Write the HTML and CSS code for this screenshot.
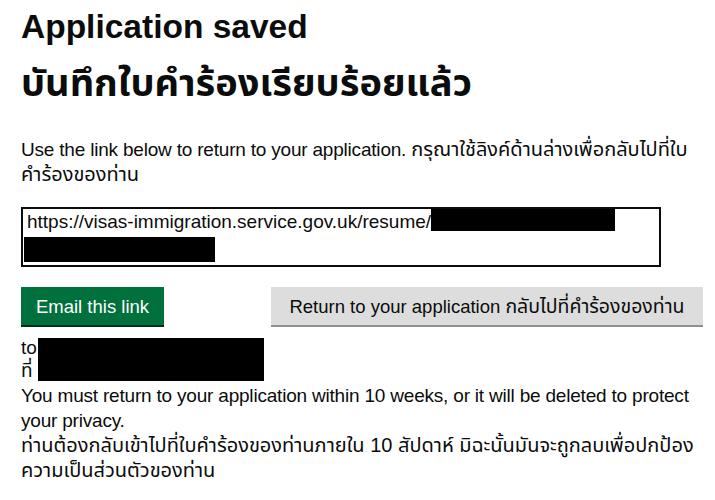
FILE: index.html
```html
<!DOCTYPE html>
<html lang="en">
<head>
<meta charset="utf-8">
<title>Application saved</title>
<link rel="stylesheet" href="styles.css">
</head>
<body>
<main class="page">
  <h1 class="title">
    <span class="title-line">Application saved</span>
    <span class="title-line title-thai">บันทึกใบคำร้องเรียบร้อยแล้ว</span>
  </h1>
  <p class="body-text intro">Use the link below to return to your application. <span class="th">กรุณาใช้ลิงค์ด้านล่างเพื่อกลับไปที่ใบคำร้องของท่าน</span></p>
  <div class="link-box">
    <span class="link-text">https://visas-immigration.service.gov.uk/resume/</span><span class="redact redact-a"></span><br>
    <span class="redact redact-b"></span>
  </div>
  <div class="actions">
    <button class="btn btn-green" type="button">Email this link</button>
    <button class="btn btn-grey" type="button">Return to your application <span class="th">กลับไปที่คำร้องของท่าน</span></button>
  </div>
  <div class="sent">
    <div class="sent-lines">
      <span>to</span>
      <span class="th">ที่</span>
    </div>
    <span class="redact redact-c"></span>
  </div>
  <p class="body-text warning">You must return to your application within 10 weeks, or it will be deleted to protect your privacy.<br><span class="th">ท่านต้องกลับเข้าไปที่ใบคำร้องของท่านภายใน 10 สัปดาห์ มิฉะนั้นมันจะถูกลบเพื่อปกป้องความเป็นส่วนตัวของท่าน</span></p>
</main>
</body>
</html>
```

FILE: styles.css
```css
html, body {
  margin: 0;
  padding: 0;
  background: #ffffff;
}
body {
  font-family: "Liberation Sans", "Noto Sans Thai", "Noto Sans", "DejaVu Sans", sans-serif;
  color: #0b0c0c;
}
.page {
  padding: 9px 0 0 21px;
}
.title {
  margin: 0;
  font-size: 33.5px;
  font-weight: 700;
  line-height: 36px;
  display: flex;
  flex-direction: column;
  gap: 18px;
}
.title-thai {
  font-size: 38px;
  line-height: 40px;
}
.th {
  font-size: 20px;
  line-height: 24px;
  letter-spacing: 0;
}
.body-text {
  margin: 0;
  font-size: 19px;
  line-height: 25px;
  letter-spacing: -0.2px;
  width: 694px;
}
.intro {
  margin-top: 34px;
}
.link-box {
  margin-top: 20px;
  width: 630px;
  height: 56px;
  border: 2px solid #0b0c0c;
  padding: 0 2px 0 4px;
  font-size: 19px;
  line-height: 26px;
}
.redact {
  display: inline-block;
  background: #000;
  vertical-align: top;
}
.redact-a {
  width: 184px;
  height: 22px;
}
.redact-b {
  width: 191px;
  height: 25px;
  margin-left: -3px;
  margin-top: 2px;
}
.actions {
  margin-top: 20px;
  display: flex;
  gap: 107px;
}
.btn {
  font-family: inherit;
  font-size: 18.5px;
  line-height: 20px;
  border: 0;
  padding: 9px 10px 8px;
  height: 38px;
  white-space: nowrap;
}
.btn .th {
  font-size: 19.5px;
  line-height: 20px;
}
.btn-green {
  background: #00703c;
  color: #ffffff;
  box-shadow: 0 2px 0 #002d18;
  width: 143px;
}
.btn-grey {
  background: #dddddd;
  color: #0b0c0c;
  box-shadow: 0 2px 0 #929191;
  width: 432px;
}
.sent {
  margin-top: 11px;
  display: flex;
  align-items: flex-start;
  font-size: 19px;
  line-height: 23px;
}
.sent-lines {
  display: flex;
  flex-direction: column;
  width: 17px;
}
.sent-lines .th {
  font-size: 19px;
  line-height: 23px;
}
.redact-c {
  width: 226px;
  height: 43px;
  margin-top: 2px;
}
.warning {
  margin-top: 1px;
}
```
